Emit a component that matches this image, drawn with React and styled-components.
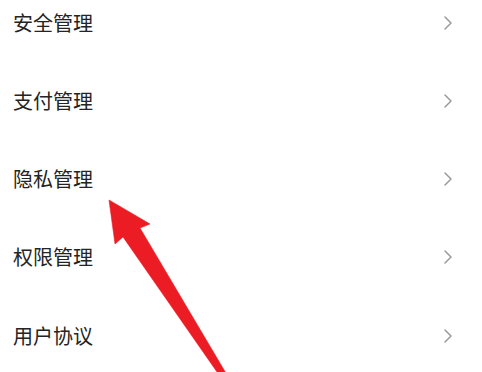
import React from "react";
import styled, { createGlobalStyle } from "styled-components";

const Global = createGlobalStyle`
  html, body { margin: 0; padding: 0; background: #ffffff; }
  body { width: 482px; height: 372px; overflow: hidden; }
  #root { position: relative; width: 482px; height: 372px; overflow: hidden; }
`;

const Page = styled.div`
  position: relative;
  width: 482px;
  height: 372px;
  overflow: hidden;
  background: #ffffff;
`;

const List = styled.ul`
  list-style: none;
  margin: -16.6px 0 0;
  padding: 0 30px 0 13px;
  display: flex;
  flex-direction: column;
`;

const Row = styled.li`
  height: 78.25px;
  display: flex;
  align-items: center;
  justify-content: space-between;
`;

const Label = styled.span`
  font-family: "Noto Sans CJK SC", "Noto Sans", sans-serif;
  font-size: 20px;
  line-height: 1;
  color: #242424;
  letter-spacing: 0;
`;

const Chevron = styled.svg`
  width: 8px;
  height: 14px;
  flex: none;
`;

const ArrowLayer = styled.svg`
  position: absolute;
  left: 0;
  top: 0;
  width: 482px;
  height: 372px;
  pointer-events: none;
`;

const items = ["安全管理", "支付管理", "隐私管理", "权限管理", "用户协议"];

export default function App() {
  return (
    <Page>
      <Global />
      <List>
        {items.map((t) => (
          <Row key={t}>
            <Label>{t}</Label>
            <Chevron viewBox="0 0 8 14">
              <polyline
                points="1,1 7,7 1,13"
                fill="none"
                stroke="#9a9a9a"
                strokeWidth="1.5"
                strokeLinecap="round"
                strokeLinejoin="round"
              />
            </Chevron>
          </Row>
        ))}
      </List>
      <ArrowLayer viewBox="0 0 482 372">
        <polygon
          points="109,200 150,224 140,228 230,380 222.6,380 123,237 115,244"
          fill="#ec1c24"
          stroke="#ec1c24"
          strokeWidth="0.6"
          strokeLinejoin="round"
        />
      </ArrowLayer>
    </Page>
  );
}
